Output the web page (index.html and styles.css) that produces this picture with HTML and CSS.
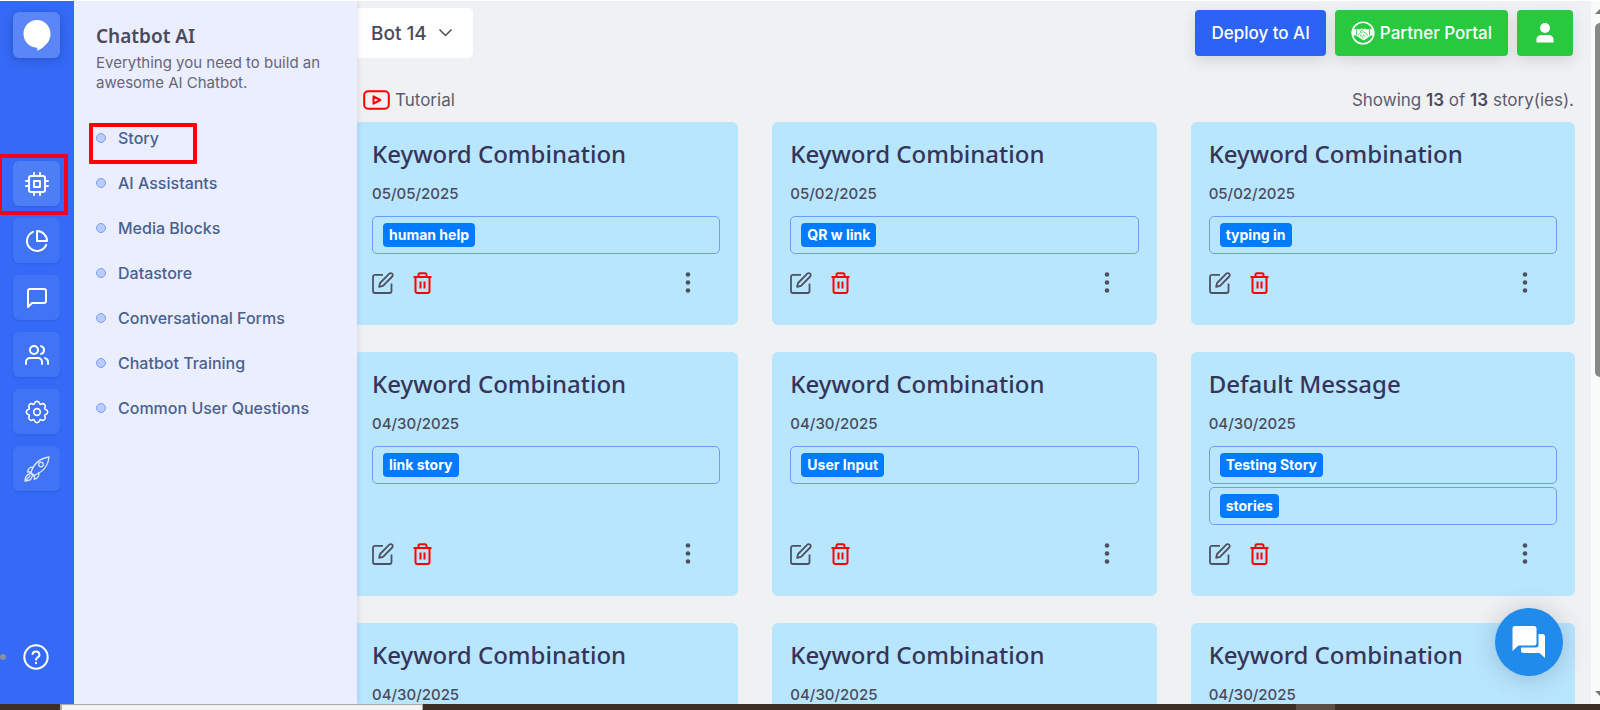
FILE: index.html
```html
<!DOCTYPE html>
<html lang="en">
<head>
<meta charset="utf-8">
<meta name="viewport" content="width=device-width, initial-scale=1">
<title>Chatbot AI – Stories</title>
<link rel="stylesheet" href="styles.css">
</head>
<body>
<svg class="sprite" aria-hidden="true">
  <symbol id="i-edit" viewBox="0 0 22 22"><path d="M11 2.800H3a2 2 0 0 0-2 2V19a2 2 0 0 0 2 2h14.500a2 2 0 0 0 2-2v-7.500M17.300 1.700a2 2 0 0 1 2.900 2.800l-9.200 9.400-3.900 1 1-3.900z"/></symbol>
  <symbol id="i-trash" viewBox="0 0 22 22"><path d="M1.500 5h18M6.500 5V2.800c0-.9.600-1.500 1.500-1.500h5c.9 0 1.500.6 1.500 1.500V5M3.500 5v14c0 1.100.8 1.900 1.900 1.900h10.200c1.100 0 1.900-.8 1.900-1.900V5"/><path d="M8.500 9.500v7M12.500 9.500v7"/></symbol>
  <symbol id="i-more" viewBox="0 0 22 22"><circle cx="11" cy="2.500" r="2.300"/><circle cx="11" cy="10.500" r="2.300"/><circle cx="11" cy="18.500" r="2.300"/></symbol>
</svg>
<div class="app">
  <nav class="rail" aria-label="Main">
    <a class="rail-btn logo" href="#" aria-label="Home"><svg width="28" height="32" viewBox="0 0 28 32" fill="#fff"><path d="M14 1C6.300 1 .5 7.300.5 14.800c0 6.200 3.800 11.300 9.500 13.300 1.800.5 3.700.6 4.200.9.300.6 0 1.600-.2 2.700 3.300-1 5.500-2.600 7.300-4.700 4-2.800 6.200-7.200 6.200-12.200C27.500 7.300 21.700 1 14 1z"/></svg></a>
    <div class="rail-list">
      <a class="rail-btn active" href="#" aria-label="Chatbot AI"><svg viewBox="0 0 24 24"><rect x="4" y="4" width="16" height="16" rx="2"/><rect x="9" y="9" width="6" height="6"/><path d="M9 1v3M15 1v3M9 20v3M15 20v3M20 9h3M20 14h3M1 9h3M1 14h3"/></svg></a>
      <a class="rail-btn" href="#" aria-label="Reports"><svg viewBox="0 0 24 24"><path d="M21.200 15.900A10 10 0 1 1 8 2.800M22 12A10 10 0 0 0 12 2v10z"/></svg></a>
      <a class="rail-btn" href="#" aria-label="Messages"><svg viewBox="0 0 24 24"><path d="M21 15a2 2 0 0 1-2 2H7l-4 4V5a2 2 0 0 1 2-2h14a2 2 0 0 1 2 2z"/></svg></a>
      <a class="rail-btn" href="#" aria-label="Users"><svg viewBox="0 0 24 24"><path d="M17 21v-2a4 4 0 0 0-4-4H5a4 4 0 0 0-4 4v2"/><circle cx="9" cy="7" r="4"/><path d="M23 21v-2a4 4 0 0 0-3-3.870M16 3.130a4 4 0 0 1 0 7.750"/></svg></a>
      <a class="rail-btn" href="#" aria-label="Settings"><svg class="gear" viewBox="-1 -1 18 18"><circle cx="8" cy="8" r="2.500"/><path d="M9.796 1.343c-.527-1.790-3.065-1.790-3.592 0l-.094.319a.873.873 0 0 1-1.255.520l-.292-.160c-1.640-.892-3.433.902-2.540 2.541l.159.292a.873.873 0 0 1-.520 1.255l-.319.094c-1.790.527-1.790 3.065 0 3.592l.319.094a.873.873 0 0 1 .520 1.255l-.160.292c-.892 1.640.901 3.434 2.541 2.540l.292-.159a.873.873 0 0 1 1.255.520l.094.319c.527 1.790 3.065 1.790 3.592 0l.094-.319a.873.873 0 0 1 1.255-.520l.292.160c1.640.893 3.434-.902 2.540-2.541l-.159-.292a.873.873 0 0 1 .520-1.255l.319-.094c1.790-.527 1.790-3.065 0-3.592l-.319-.094a.873.873 0 0 1-.520-1.255l.160-.292c.893-1.640-.902-3.433-2.541-2.540l-.292.159a.873.873 0 0 1-1.255-.520z"/></svg></a>
      <a class="rail-btn" href="#" aria-label="Launch"><svg class="rocket" viewBox="0 0 26 26"><path d="M7 16.500C9 10 14 2.500 25 1 24 11.500 16.500 17 9.800 19.300zM9.500 11.300c-3-.5-5 .5-6 4.700l3.500-.4M14.700 16.500c.8 3.300-.5 5.500-4.400 7l.3-4M6 16.800l3.300 3.300M5.500 18C3 18.500 1.200 20.500 1 25c4 0 6.500-1.500 7-4.300M2 24l4-4"/><circle cx="17" cy="8.500" r="2.300"/></svg></a>
    </div>
    <a class="help" href="#" aria-label="Help"><svg viewBox="0 0 26 26"><circle cx="13" cy="13" r="11.700"/><path d="M9.500 10a3.600 3.600 0 0 1 7 1c0 2.300-3.500 2.500-3.500 4.700M13 18.800v.4"/></svg></a>
    <span class="rail-dot"></span>
    <span class="mark mark-rail"></span>
  </nav>

  <aside class="panel">
    <h2>Chatbot AI</h2>
    <p>Everything you need to build an awesome AI Chatbot.</p>
    <ul>
      <li><a href="#">Story</a></li>
      <li><a href="#">AI Assistants</a></li>
      <li><a href="#">Media Blocks</a></li>
      <li><a href="#">Datastore</a></li>
      <li><a href="#">Conversational Forms</a></li>
      <li><a href="#">Chatbot Training</a></li>
      <li><a href="#">Common User Questions</a></li>
    </ul>
    <span class="mark mark-story"></span>
  </aside>

  <main class="main">
    <header class="topbar">
      <button class="bot" type="button">Bot 14 <svg width="14" height="10" viewBox="0 0 14 10"><path d="M1 1.500l6 6 6-6"/></svg></button>
      <div class="actions">
        <button class="btn blue" type="button">Deploy to AI</button>
        <button class="btn green" type="button"><svg width="24" height="24" viewBox="0 0 24 24"><circle cx="12" cy="12" r="10.800" fill="none" stroke="#fff" stroke-width="1.600"/><path fill="#fff" d="M2 8.500l4-.7 2 .8 3-1 1.300.4 1.500-.5 3 1 1.700-.7 3.800.7v6h-2.600l-6 4.500c-1 .5-1.700.2-2.200-.2L5 14.600H2z"/><path fill="none" stroke="#28c93f" stroke-width=".8" d="M5.500 8v6.300M18.500 8v6M12 8.300l-3 2.500c.8 1.200 2 .8 3.300-.3l5 4M14.600 15.800l-2.600-2.100M12.800 17.300l-2.300-1.900M7 14l1.500-1.400 1 1M8.800 15.500l1.300-1.400 1.200 1"/></svg>Partner Portal</button>
        <button class="btn green user" type="button" aria-label="Account"><svg width="18" height="20" viewBox="0 0 18 20" fill="#fff"><circle cx="9" cy="5" r="5"/><path d="M.5 19.500v-3c0-3 2.500-4.500 5-4.500h7c2.500 0 5 1.500 5 4.500v3z"/></svg></button>
      </div>
    </header>
    <div class="subbar">
      <a class="tutorial" href="#"><svg width="27" height="20" viewBox="0 0 27 20"><rect x="1.200" y="1.200" width="24.600" height="17.600" rx="4"/><path d="M10.500 6.300v7.400l6.800-3.700z"/></svg>Tutorial</a>
      <p>Showing <b>13</b> of <b>13</b> story(ies).</p>
    </div>
    <section class="grid">
      <article class="card"><h3>Keyword Combination</h3><time>05/05/2025</time><div class="tags"><div class="tag"><span>human help</span></div></div><div class="tools"><button type="button" aria-label="Edit"><svg><use href="#i-edit"/></svg></button><button class="del" type="button" aria-label="Delete"><svg><use href="#i-trash"/></svg></button><button class="more" type="button" aria-label="More"><svg><use href="#i-more"/></svg></button></div></article>
      <article class="card"><h3>Keyword Combination</h3><time>05/02/2025</time><div class="tags"><div class="tag"><span>QR w link</span></div></div><div class="tools"><button type="button" aria-label="Edit"><svg><use href="#i-edit"/></svg></button><button class="del" type="button" aria-label="Delete"><svg><use href="#i-trash"/></svg></button><button class="more" type="button" aria-label="More"><svg><use href="#i-more"/></svg></button></div></article>
      <article class="card"><h3>Keyword Combination</h3><time>05/02/2025</time><div class="tags"><div class="tag"><span>typing in</span></div></div><div class="tools"><button type="button" aria-label="Edit"><svg><use href="#i-edit"/></svg></button><button class="del" type="button" aria-label="Delete"><svg><use href="#i-trash"/></svg></button><button class="more" type="button" aria-label="More"><svg><use href="#i-more"/></svg></button></div></article>
      <article class="card"><h3>Keyword Combination</h3><time>04/30/2025</time><div class="tags"><div class="tag"><span>link story</span></div></div><div class="tools"><button type="button" aria-label="Edit"><svg><use href="#i-edit"/></svg></button><button class="del" type="button" aria-label="Delete"><svg><use href="#i-trash"/></svg></button><button class="more" type="button" aria-label="More"><svg><use href="#i-more"/></svg></button></div></article>
      <article class="card"><h3>Keyword Combination</h3><time>04/30/2025</time><div class="tags"><div class="tag"><span>User Input</span></div></div><div class="tools"><button type="button" aria-label="Edit"><svg><use href="#i-edit"/></svg></button><button class="del" type="button" aria-label="Delete"><svg><use href="#i-trash"/></svg></button><button class="more" type="button" aria-label="More"><svg><use href="#i-more"/></svg></button></div></article>
      <article class="card"><h3>Default Message</h3><time>04/30/2025</time><div class="tags"><div class="tag"><span>Testing Story</span></div><div class="tag"><span>stories</span></div></div><div class="tools"><button type="button" aria-label="Edit"><svg><use href="#i-edit"/></svg></button><button class="del" type="button" aria-label="Delete"><svg><use href="#i-trash"/></svg></button><button class="more" type="button" aria-label="More"><svg><use href="#i-more"/></svg></button></div></article>
      <article class="card"><h3>Keyword Combination</h3><time>04/30/2025</time></article>
      <article class="card"><h3>Keyword Combination</h3><time>04/30/2025</time></article>
      <article class="card"><h3>Keyword Combination</h3><time>04/30/2025</time></article>
    </section>
  </main>
  <div class="scroll" aria-hidden="true"><i class="up"></i><i class="thumb"></i><i class="down"></i></div>
  <button class="fab" type="button" aria-label="Open chat"><svg width="34" height="34" viewBox="0 0 34 34" fill="#fff"><path d="M3 1h19a2.500 2.500 0 0 1 2.500 2.500v14.500a2.500 2.500 0 0 1-2.500 2.500H6.500L.5 26V3.500A2.500 2.500 0 0 1 3 1z"/><path d="M26.500 9h4a2.500 2.500 0 0 1 2.500 2.500v21.500l-5.500-5H11.500a2.500 2.500 0 0 1-2.500-2.500v-3h15a2.500 2.500 0 0 0 2.500-2.500z"/></svg></button>
</div>
<footer class="desk"><span class="window"></span><span class="task"></span></footer>
</body>
</html>
```
FILE: styles.css
```css
* { box-sizing: border-box; }
body {
  margin: 0;
  height: 100vh;
  display: flex;
  flex-direction: column;
  overflow: hidden;
  background: #f0f1f3;
  color: #4a4a5e;
  font-family: Inter, "Open Sans", sans-serif;
  font-size: 16px;
}
h2, h3, p, ul { margin: 0; padding: 0; }
button { font: inherit; color: inherit; border: 0; background: none; padding: 0; cursor: pointer; }
a { color: inherit; text-decoration: none; }
svg { display: block; flex: none; }
.sprite { position: absolute; width: 0; height: 0; }

.app {
  position: relative;
  flex: 1;
  min-height: 0;
  display: flex;
  overflow: hidden;
  border-top: 1px solid #fff;
}

.rail {
  position: relative;
  z-index: 3;
  width: 74px;
  flex: none;
  display: flex;
  flex-direction: column;
  padding: 11px 14px 34px 13px;
  background: #346af5;
}
.rail-btn {
  height: 46px;
  display: flex;
  align-items: center;
  justify-content: center;
  border-radius: 6px;
  background: #4074f5;
  box-shadow: 0 1px 2px rgba(20, 50, 160, .2);
}
.rail-btn.logo { background: #5a86f7; box-shadow: 0 2px 8px rgba(20, 50, 140, .4); }
.rail-btn.active { background: #4e7ef6; }
.rail-list { display: grid; grid-auto-rows: 45px; gap: 12px; margin-top: 103px; }
.rail-list .rail-btn { height: auto; }
.rail-list svg, .help svg {
  width: 24px;
  height: 24px;
  fill: none;
  stroke: #fff;
  stroke-width: 2;
  stroke-linecap: round;
  stroke-linejoin: round;
}
.rail-list .gear { stroke-width: 1.200; }
.rail-list .rocket { width: 26px; height: 26px; stroke-width: 1.300; stroke: #dde6fe; }
.help { margin: auto auto 0 10px; }
.help svg { width: 26px; height: 26px; }
.rail-dot {
  position: absolute;
  left: 0;
  bottom: 44px;
  width: 6px;
  height: 6px;
  border-radius: 50%;
  background: #8a8fa3;
}
.mark { position: absolute; border: 4px solid #f00; border-radius: 1px; pointer-events: none; }
.mark-rail { left: -2px; right: 6px; top: 153px; height: 61px; border-color: #f5001d; }
.mark-story { left: 15px; top: 122px; width: 108px; height: 41px; }

.panel {
  position: relative;
  z-index: 2;
  width: 283px;
  flex: none;
  padding: 22px 22px 0;
  background: #ebeeff;
  box-shadow: 1px 0 5px rgba(60, 60, 90, .15);
}
.panel h2 { font: 600 19px/26px "Noto Sans", sans-serif; color: #4a4a5e; }
.panel p { font-size: 15px; line-height: 20px; margin-top: 4px; color: #66667a; }
.panel ul { list-style: none; margin-top: 22px; }
.panel li a {
  display: flex;
  align-items: center;
  gap: 12px;
  height: 45px;
  font-weight: 500;
  color: #48618f;
}
.panel li a::before {
  content: "";
  width: 8px;
  height: 8px;
  border: 1px solid #7ba0fa;
  border-radius: 50%;
  background: #bccbfb;
}

.main { flex: 1; min-width: 0; margin-left: -3px; padding: 7px 16px 0 0; }
.topbar { display: flex; justify-content: space-between; align-items: flex-start; }
.bot {
  display: flex;
  align-items: center;
  gap: 11px;
  height: 50px;
  padding: 0 20px 0 17px;
  border-radius: 5px;
  background: #fff;
  font-size: 19px;
  font-weight: 500;
}
.bot svg { width: 15px; fill: none; stroke: #4a4a5e; stroke-width: 1.500; }
.actions { display: flex; gap: 9px; padding: 2px 2px 0 0; }
.btn {
  display: flex;
  align-items: center;
  gap: 5px;
  height: 46px;
  padding: 0 16px;
  border-radius: 4px;
  color: #fff;
  font-size: 17px;
  font-weight: 500;
  box-shadow: 0 5px 14px rgba(60, 60, 80, .14);
}
.btn.blue { background: #2c63f4; }
.btn.green { background: #28c93f; }
.btn.user { padding: 0 19px; }
.subbar {
  display: flex;
  justify-content: space-between;
  align-items: center;
  height: 64px;
  padding: 19px 1px 0 9px;
  font-size: 17px;
  color: #5c5c70;
}
.subbar b { font-weight: 600; color: #4a4a5e; }
.tutorial { display: flex; align-items: center; gap: 5px; }
.tutorial svg { fill: none; stroke: #f00; stroke-width: 2; stroke-linejoin: round; }

.grid { display: grid; grid-template-columns: repeat(3, 1fr); gap: 27px 34px; }
.card {
  display: flex;
  flex-direction: column;
  min-height: 203px;
  padding: 14px 18px 31px;
  border-radius: 6px;
  background: #b9e6ff;
}
.card h3 { font: 500 24px/36px "Noto Sans", sans-serif; color: #35355a; }
.card time { margin-top: 12px; font-size: 15px; line-height: 20px; font-weight: 500; }
.tags { display: grid; gap: 3px; margin-top: 12px; }
.tag {
  height: 38px;
  display: flex;
  align-items: center;
  padding: 0 10px;
  border: 1px solid #6e9cfa;
  border-radius: 5px;
}
.tag span {
  padding: 0 6px;
  border-radius: 4px;
  background: #007bff;
  color: #fff;
  font-size: 14px;
  line-height: 24px;
  font-weight: 700;
}
.tools { display: flex; gap: 18px; margin-top: auto; padding: 18px 21px 0 0; }
.tools svg { width: 22px; height: 22px; fill: none; stroke: #505064; stroke-width: 1.800; stroke-linejoin: round; }
.tools .del svg { stroke: #f00; stroke-width: 2; }
.tools .more { margin-left: auto; }
.tools .more svg { fill: #505064; stroke: none; }

.scroll { width: 9px; flex: none; display: flex; flex-direction: column; align-items: flex-end; padding: 8px 0; background: #fafafa; overflow: hidden; }
.scroll i { flex: none; }
.thumb { width: 5px; height: 354px; margin-top: 9px; border-radius: 5px 0 0 5px; background: #888; }
.up, .down { width: 5px; height: 5px; background: #777; }
.up { clip-path: polygon(100% 0, 100% 100%, 0 100%); }
.down { margin-top: auto; clip-path: polygon(0 0, 100% 0, 100% 100%); }

.fab {
  position: absolute;
  z-index: 4;
  right: 37px;
  bottom: 28px;
  width: 68px;
  height: 68px;
  display: grid;
  place-items: center;
  border-radius: 50%;
  background: #208bea;
  box-shadow: 0 2px 24px rgba(40, 50, 70, .25);
}

.desk { height: 6px; flex: none; display: flex; background: #3d2f24; }
.window { width: 363px; margin-left: 60px; border: 1px solid #aaa; border-width: 1px 1px 0 2px; background: #f3f3f3; }
.task { width: 39px; margin-left: auto; margin-right: 265px; background: #5a4e45; }
```
